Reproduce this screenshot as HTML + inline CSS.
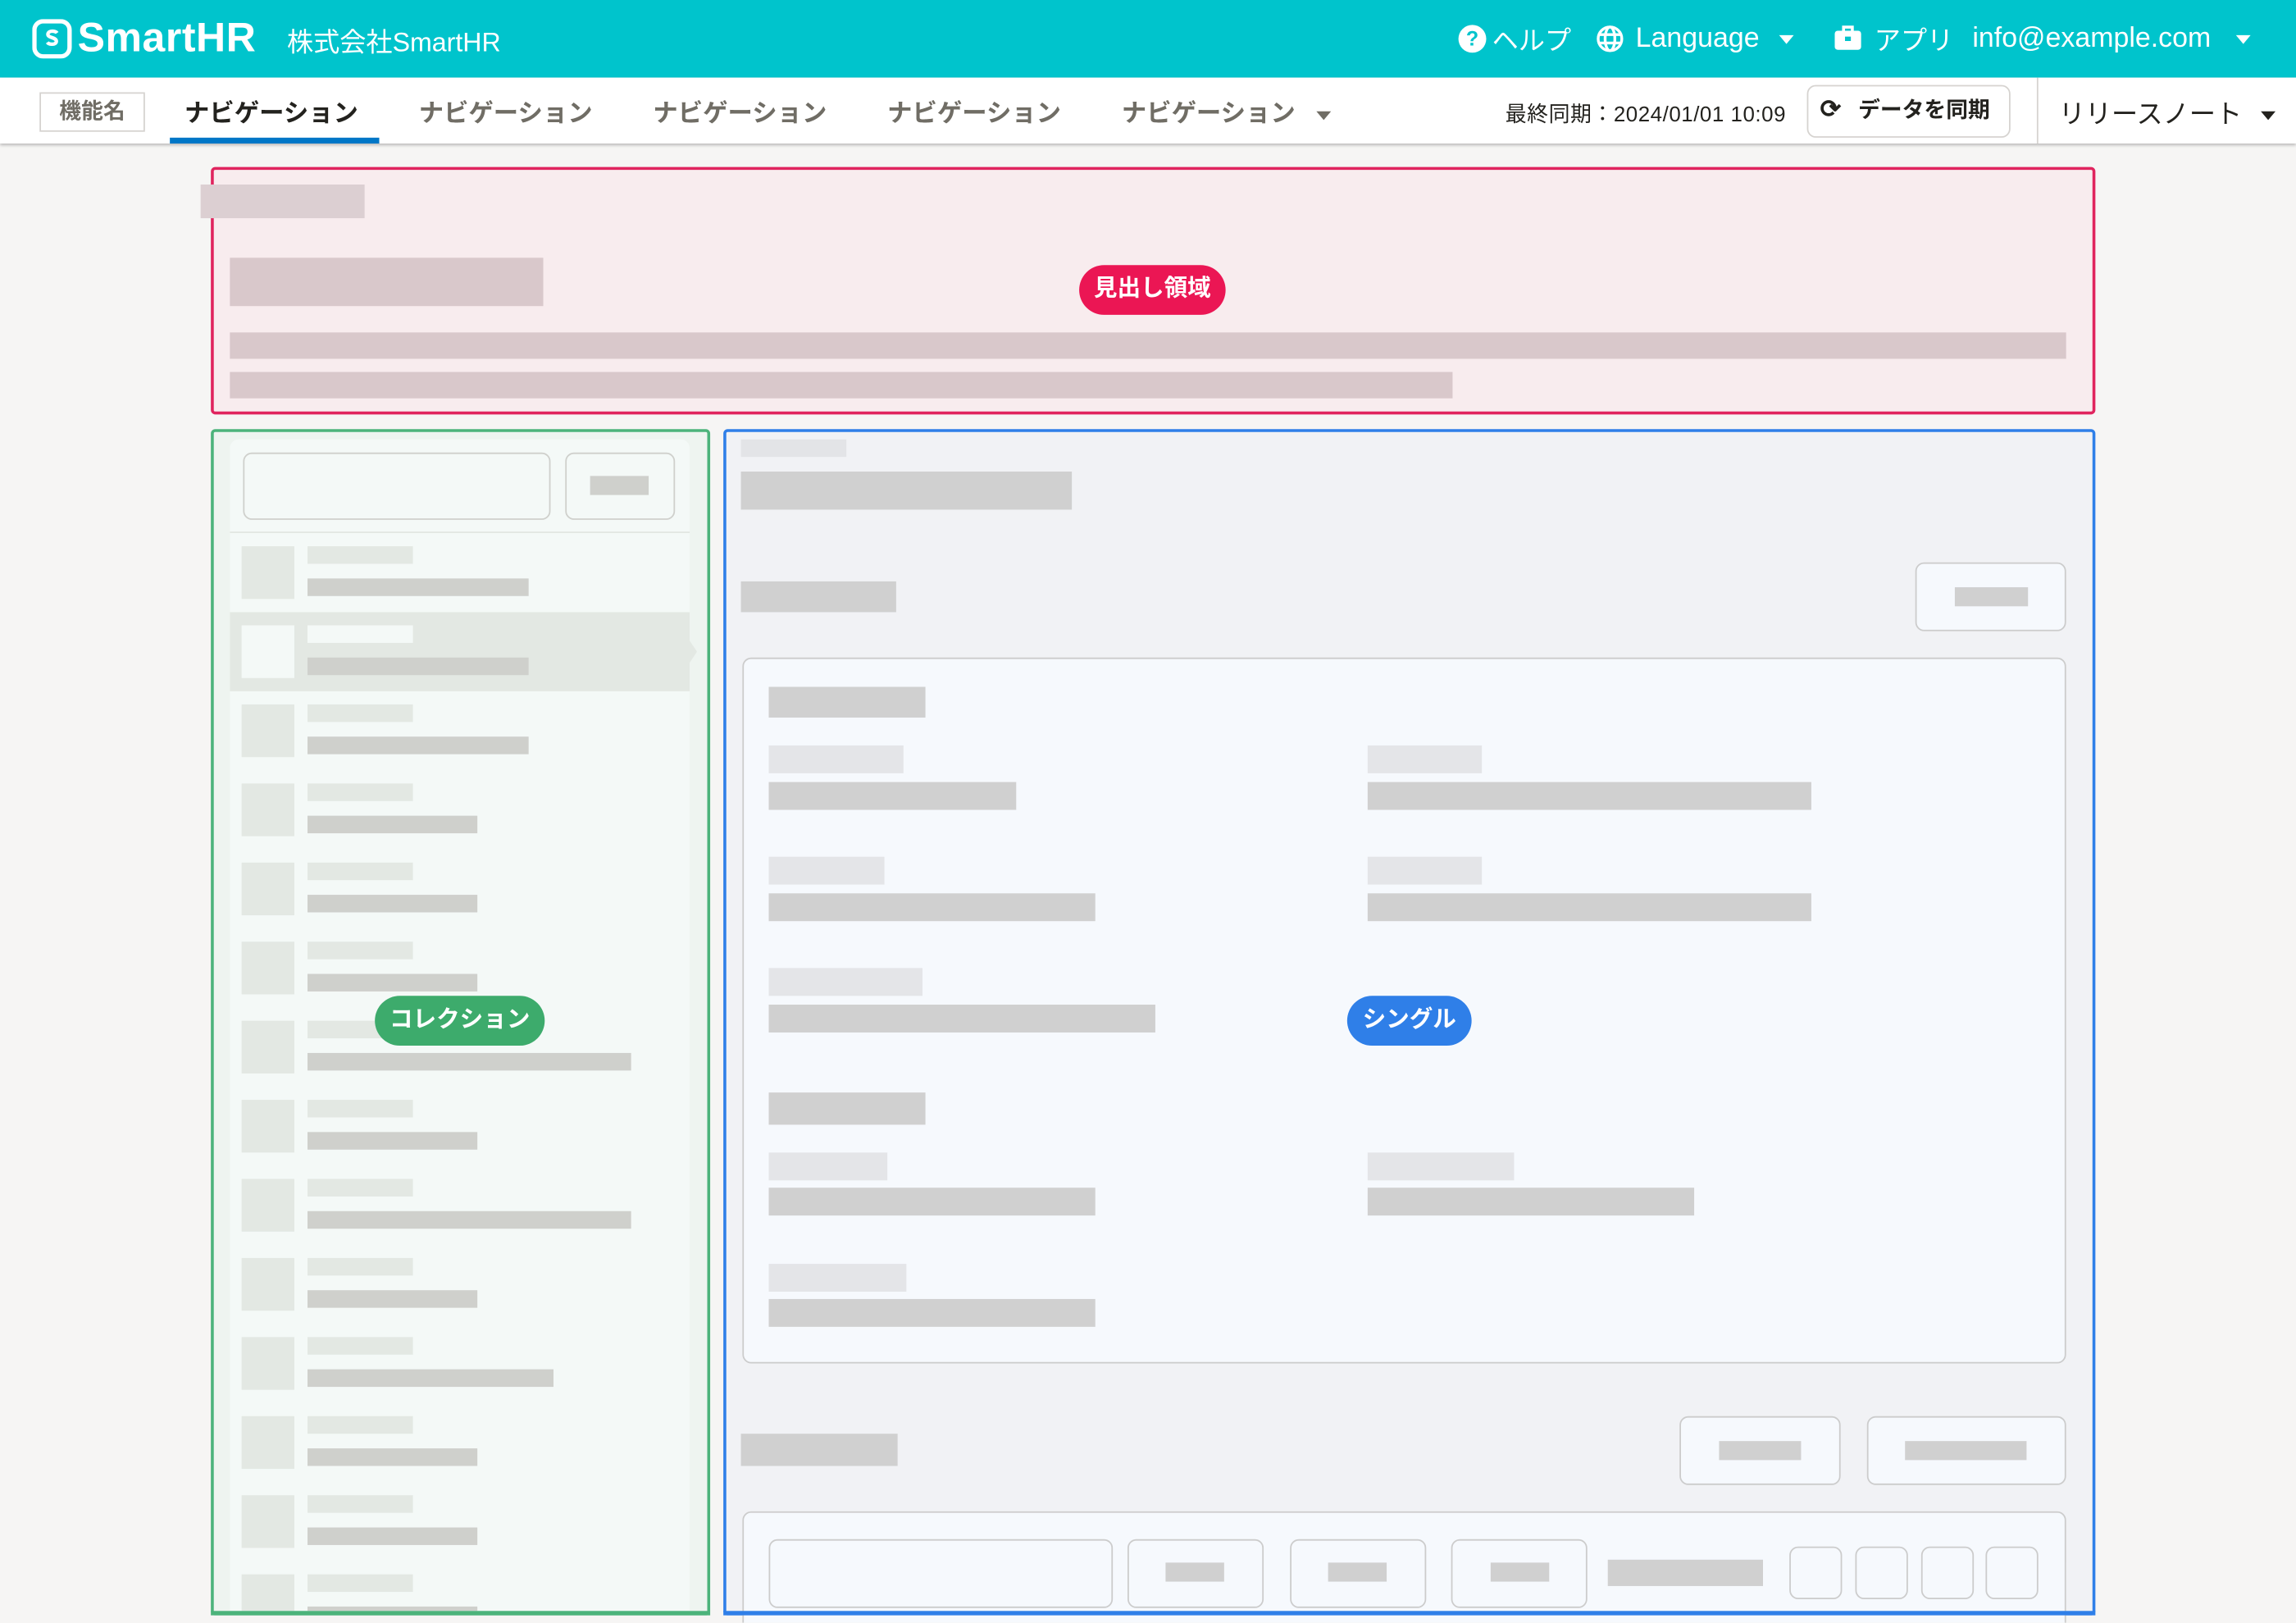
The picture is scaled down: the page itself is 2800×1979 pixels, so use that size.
<!DOCTYPE html>
<html><head><meta charset="utf-8"><style>
*{margin:0;padding:0;box-sizing:border-box}
html,body{width:2800px;height:1978px;overflow:hidden;background:#f6f5f4}
#w{position:absolute;left:0;top:0;width:1568px;height:1108px;transform:scale(1.785714);transform-origin:0 0;font-family:"Liberation Sans","Noto Sans CJK JP",sans-serif;background:#f6f5f4;overflow:hidden}
.a{position:absolute}
.g{position:absolute;background:#d0d0d0}
.hd{position:absolute;left:0;top:0;width:1568px;height:53px;background:#00c4cc;color:#fff}
.nv{position:absolute;left:0;top:53px;width:1568px;height:45px;background:#fff;box-shadow:0 1px 2px rgba(0,0,0,.25)}
.ni{position:absolute;top:10px;font-size:17px;font-weight:bold;color:#706d65}
.bx{position:absolute;border:1px solid #ccc;border-radius:6px;background:#f6f9fd}
.badge{position:absolute;color:#fff;font-weight:bold;font-size:16px;border-radius:18px;text-align:center;line-height:34px;height:34px}
.tri{display:inline-block;width:0;height:0;border-left:5px solid transparent;border-right:5px solid transparent;border-top:6px solid currentColor;vertical-align:middle}
#clip{position:absolute;left:157px;top:364px;width:314px;height:736px;overflow:hidden}
</style></head><body><div id="w">
<div class="hd">
 <svg class="a" style="left:22px;top:13px" width="27" height="27" viewBox="0 0 27 27"><rect x="1.5" y="1.5" width="24" height="24" rx="6" fill="none" stroke="#fff" stroke-width="3"/><path d="M17 9.5c-1-1.5-6-2-6.3.8-.3 2.7 6 2 5.8 5-.2 2.5-5 2.3-6.2.6" fill="none" stroke="#fff" stroke-width="2.4"/></svg>
 <div class="a" style="left:53px;top:10px;font-size:28px;font-weight:bold;letter-spacing:0.3px">SmartHR</div>
 <div class="a" style="left:196px;top:15px;font-size:18px">株式会社SmartHR</div>
 <div class="a" style="left:996px;top:17px;width:19px;height:19px;border-radius:50%;background:#fff;color:#00c4cc;font-size:14px;font-weight:bold;text-align:center;line-height:19px">?</div>
 <div class="a" style="left:1019px;top:14px;font-size:18px">ヘルプ</div>
 <svg class="a" style="left:1090px;top:17px" width="19" height="19" viewBox="0 0 20 20"><circle cx="10" cy="10" r="8.5" fill="none" stroke="#fff" stroke-width="2"/><ellipse cx="10" cy="10" rx="3.5" ry="8.5" fill="none" stroke="#fff" stroke-width="2"/><path d="M2 7h16M2 13h16" stroke="#fff" stroke-width="2"/></svg>
 <div class="a" style="left:1117px;top:16px;font-size:19px">Language <span class="tri" style="margin-left:8px"></span></div>
 <svg class="a" style="left:1252px;top:17px" width="20" height="18" viewBox="0 0 20 18"><path d="M7 4V1.5h6V4" fill="none" stroke="#fff" stroke-width="2"/><rect x="1" y="4" width="18" height="13" rx="2" fill="#fff"/><rect x="8" y="8" width="4" height="3" fill="#00c4cc"/></svg>
 <div class="a" style="left:1280px;top:14px;font-size:18px">アプリ</div>
 <div class="a" style="left:1347px;top:16px;font-size:19px">info@example.com <span class="tri" style="margin-left:12px"></span></div>
</div>
<div class="nv">
 <div class="a" style="left:27px;top:10px;width:72px;height:27px;border:1px solid #d6d3d0;font-size:15px;font-weight:bold;color:#706d65;text-align:center;line-height:25px">機能名</div>
 <div class="ni" style="left:126px;color:#23221e">ナビゲーション</div>
 <div class="a" style="left:116px;top:41px;width:143px;height:4px;background:#0077c7"></div>
 <div class="ni" style="left:286px">ナビゲーション</div>
 <div class="ni" style="left:446px">ナビゲーション</div>
 <div class="ni" style="left:606px">ナビゲーション</div>
 <div class="ni" style="left:766px">ナビゲーション <span class="tri" style="margin-left:10px"></span></div>
 <div class="a" style="left:1028px;top:14px;font-size:14.5px;color:#23221e;letter-spacing:0.3px">最終同期：2024/01/01 10:09</div>
 <div class="a" style="left:1234px;top:5px;width:139px;height:36px;border:1px solid #d6d3d0;border-radius:6px;font-size:15px;font-weight:bold;color:#23221e;line-height:34px;padding-left:34px">データを同期</div>
 <div class="a" style="left:1243px;top:12px;font-size:17px;font-weight:bold;color:#23221e">⟳</div>
 <div class="a" style="left:1391px;top:0;width:1px;height:45px;background:#d6d3d0"></div>
 <div class="a" style="left:1406px;top:11px;font-size:18px;color:#23221e">リリースノート <span class="tri" style="margin-left:8px"></span></div>
</div>

<div class="a" style="left:144px;top:114px;width:1287px;height:169px;border:2px solid #e0245e;border-radius:3px;background:#f8ecee"></div>
<div class="a" style="left:137px;top:126px;width:112px;height:23px;background:#dccfd2"></div>
<div class="a" style="left:157px;top:176px;width:214px;height:33px;background:#d9c8cb"></div>
<div class="a" style="left:157px;top:227px;width:1254px;height:18px;background:#d9c8cb"></div>
<div class="a" style="left:157px;top:254px;width:835px;height:18px;background:#d9c8cb"></div>
<div class="badge" style="left:737px;top:181px;width:100px;background:#eb1654">見出し領域</div>

<div class="a" style="left:144px;top:293px;width:341px;height:810px;border:2px solid #4cb37b;border-radius:3px;background:#eef4f0"></div>
<div class="a" style="left:157px;top:300px;width:314px;height:800px;background:#f4f9f7;border-radius:6px 6px 0 0"></div>
<div class="a" style="left:166px;top:309px;width:210px;height:46px;border:1px solid #cfd0cc;border-radius:6px"></div>
<div class="a" style="left:386px;top:309px;width:75px;height:46px;border:1px solid #cfd0cc;border-radius:6px"></div>
<div class="a" style="left:403px;top:325px;width:40px;height:13px;background:#cfd0cc"></div>
<div class="a" style="left:157px;top:363px;width:314px;height:1px;background:#e2e7e2"></div>
<div class="a" style="left:157px;top:418px;width:314px;height:54px;background:#e3e8e3"></div>
<div class="a" style="left:470px;top:436px;width:0;height:0;border-top:9px solid transparent;border-bottom:9px solid transparent;border-left:6px solid #e3e8e3"></div>
<div id="clip"><div id="rows"></div></div>

<div class="a" style="left:494px;top:293px;width:937px;height:810px;border:2px solid #2f7fe8;border-radius:3px;background:#f1f2f5"></div>
<div class="a" style="left:506px;top:300px;width:72px;height:12px;background:#e3e4e7"></div>
<div class="g" style="left:506px;top:322px;width:226px;height:26px"></div>
<div class="g" style="left:506px;top:397px;width:106px;height:21px"></div>
<div class="bx" style="left:1308px;top:384px;width:103px;height:47px"></div>
<div class="g" style="left:1335px;top:401px;width:50px;height:13px"></div>
<div class="bx" style="left:507px;top:449px;width:904px;height:482px"></div>
<div class="g" style="left:525px;top:469px;width:107px;height:21px"></div>
<div class="a" style="left:525px;top:509px;width:92px;height:19px;background:#e4e5e8"></div>
<div class="g" style="left:525px;top:534px;width:169px;height:19px"></div>
<div class="a" style="left:934px;top:509px;width:78px;height:19px;background:#e4e5e8"></div>
<div class="g" style="left:934px;top:534px;width:303px;height:19px"></div>
<div class="a" style="left:525px;top:585px;width:79px;height:19px;background:#e4e5e8"></div>
<div class="g" style="left:525px;top:610px;width:223px;height:19px"></div>
<div class="a" style="left:934px;top:585px;width:78px;height:19px;background:#e4e5e8"></div>
<div class="g" style="left:934px;top:610px;width:303px;height:19px"></div>
<div class="a" style="left:525px;top:661px;width:105px;height:19px;background:#e4e5e8"></div>
<div class="g" style="left:525px;top:686px;width:264px;height:19px"></div>
<div class="g" style="left:525px;top:746px;width:107px;height:22px"></div>
<div class="a" style="left:525px;top:787px;width:81px;height:19px;background:#e4e5e8"></div>
<div class="g" style="left:525px;top:811px;width:223px;height:19px"></div>
<div class="a" style="left:934px;top:787px;width:100px;height:19px;background:#e4e5e8"></div>
<div class="g" style="left:934px;top:811px;width:223px;height:19px"></div>
<div class="a" style="left:525px;top:863px;width:94px;height:19px;background:#e4e5e8"></div>
<div class="g" style="left:525px;top:887px;width:223px;height:19px"></div>
<div class="g" style="left:506px;top:979px;width:107px;height:22px"></div>
<div class="bx" style="left:1147px;top:967px;width:110px;height:47px"></div>
<div class="g" style="left:1174px;top:984px;width:56px;height:13px"></div>
<div class="bx" style="left:1275px;top:967px;width:136px;height:47px"></div>
<div class="g" style="left:1301px;top:984px;width:83px;height:13px"></div>
<div class="bx" style="left:507px;top:1032px;width:904px;height:90px"></div>
<div class="bx" style="left:525px;top:1051px;width:235px;height:47px"></div>
<div class="bx" style="left:770px;top:1051px;width:93px;height:47px"></div>
<div class="g" style="left:796px;top:1067px;width:40px;height:13px"></div>
<div class="bx" style="left:881px;top:1051px;width:93px;height:47px"></div>
<div class="g" style="left:907px;top:1067px;width:40px;height:13px"></div>
<div class="bx" style="left:991px;top:1051px;width:93px;height:47px"></div>
<div class="g" style="left:1018px;top:1067px;width:40px;height:13px"></div>
<div class="g" style="left:1098px;top:1065px;width:106px;height:18px"></div>
<div class="bx" style="left:1222px;top:1056px;width:36px;height:36px"></div>
<div class="bx" style="left:1267px;top:1056px;width:36px;height:36px"></div>
<div class="bx" style="left:1312px;top:1056px;width:36px;height:36px"></div>
<div class="bx" style="left:1356px;top:1056px;width:36px;height:36px"></div>
<div class="a" style="left:494px;top:1100px;width:937px;height:3px;background:#2f7fe8"></div>
<div class="a" style="left:144px;top:1100px;width:341px;height:3px;background:#4cb37b"></div>

<div class="badge" style="left:256px;top:680px;width:116px;background:#3dab6c">コレクション</div>
<div class="badge" style="left:920px;top:680px;width:85px;background:#2f7fe8">シングル</div>
</div>
<script>
var w=[151,151,151,116,116,116,221,116,221,116,168,116,116,116,116];var h='';
for(var i=0;i<w.length;i++){var y=9+i*54;var sel=i==1;
h+='<div class="a" style="left:8px;top:'+y+'px;width:36px;height:36px;background:'+(sel?'#f4f9f7':'#e3e8e3')+'"></div>';
h+='<div class="a" style="left:53px;top:'+y+'px;width:72px;height:12px;background:'+(sel?'#f4f9f7':'#e3e8e3')+'"></div>';
h+='<div class="a" style="left:53px;top:'+(y+22)+'px;width:'+w[i]+'px;height:12px;background:#cfd0cc"></div>';}
document.getElementById('rows').outerHTML=h;
</script>
</body></html>
